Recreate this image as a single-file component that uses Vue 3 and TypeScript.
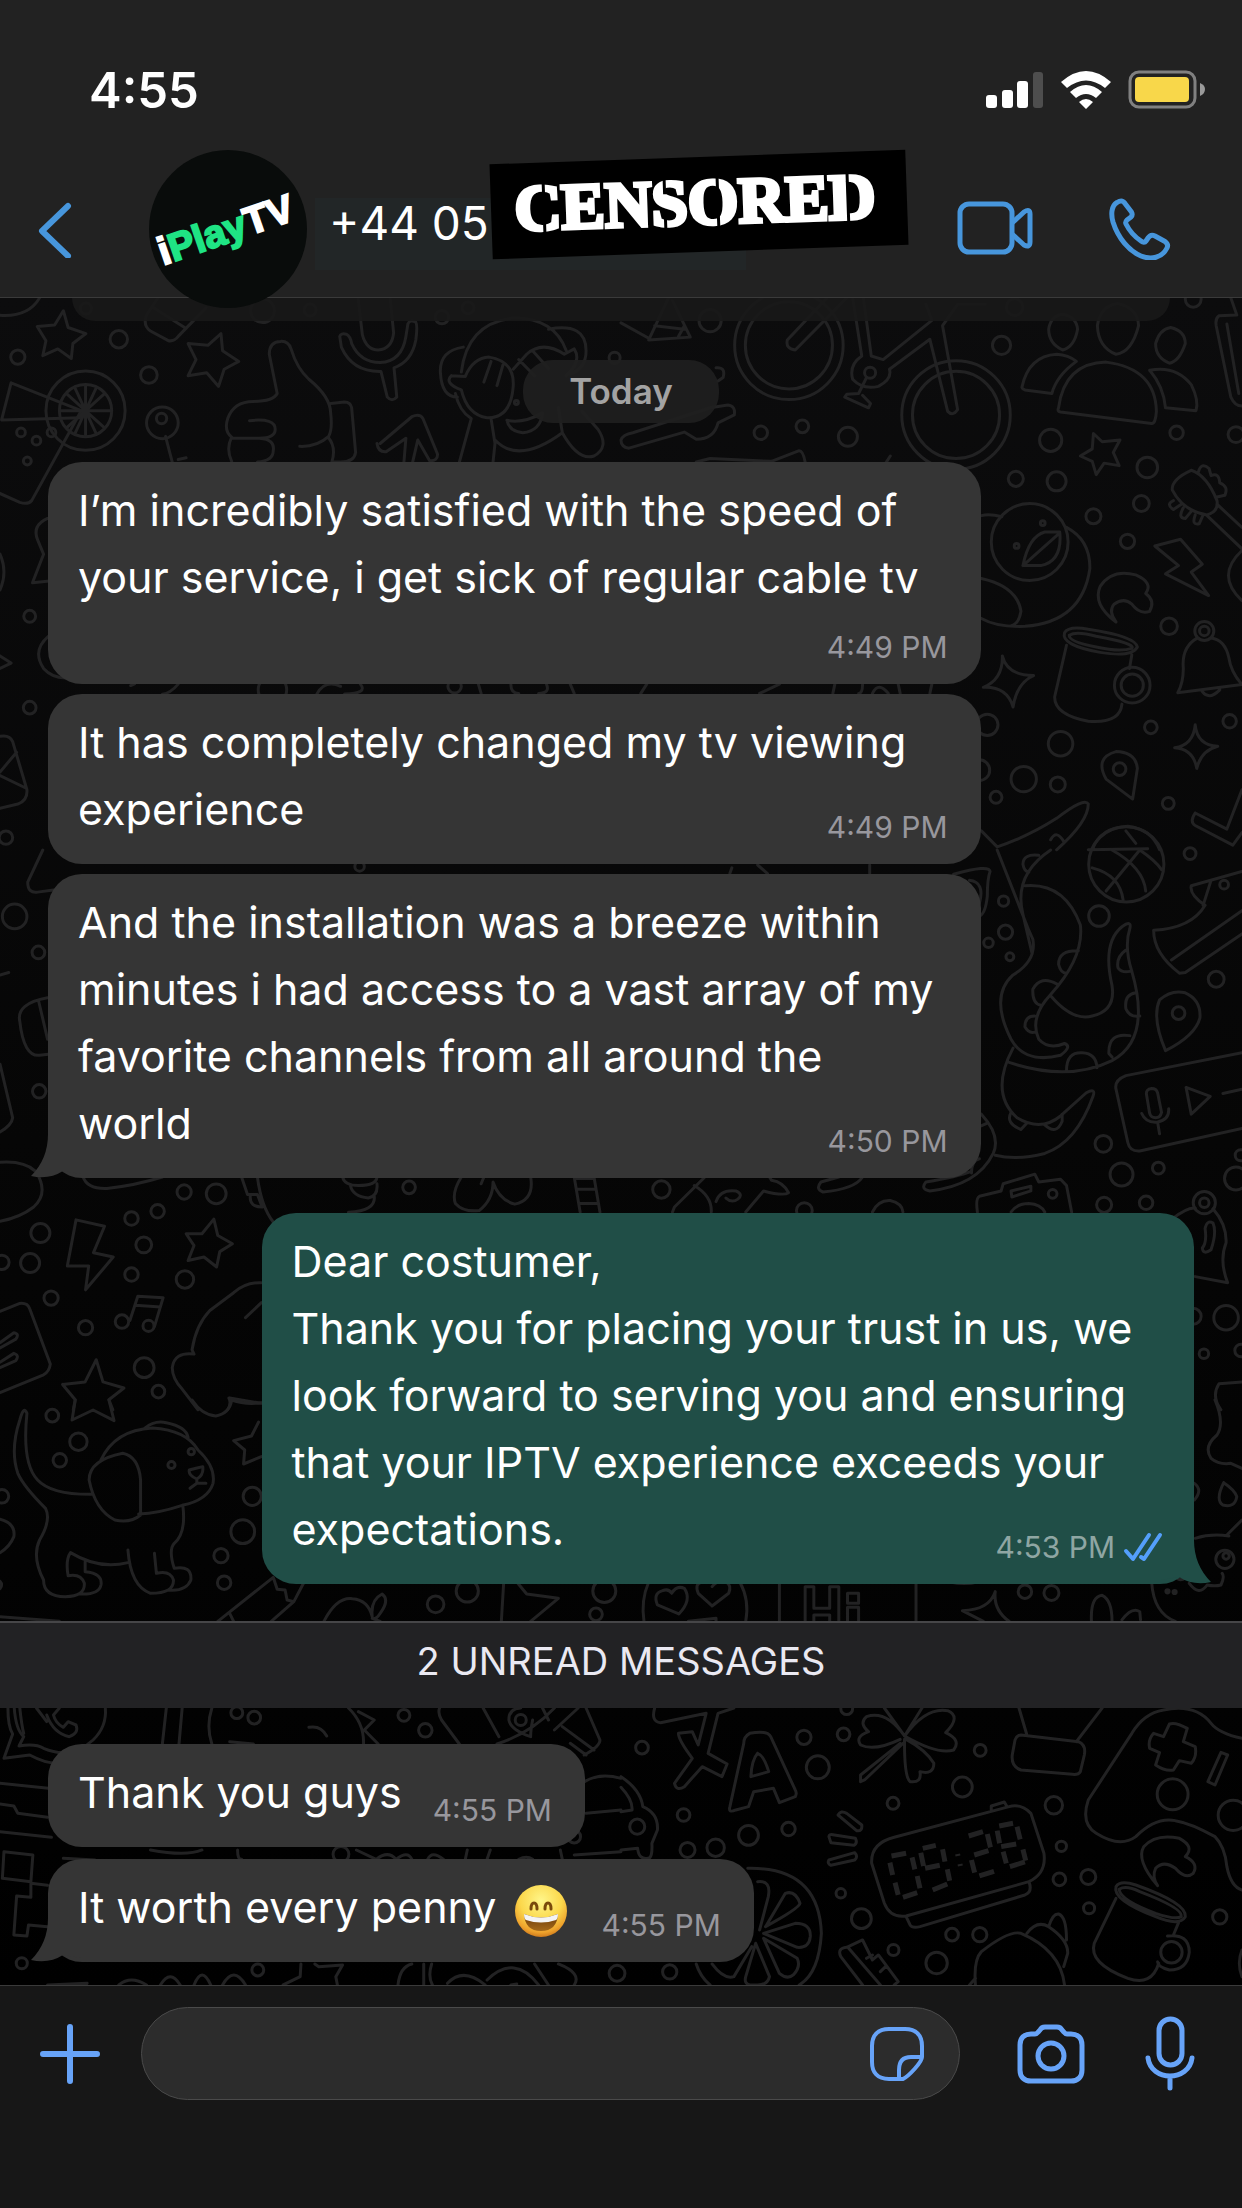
<script setup lang="ts">
interface Message {
  id: number
  lines: string[]
  time: string
  kind: 'wide' | 'short'
  sent?: boolean
  tall?: boolean
  tail?: boolean
  emoji?: boolean
}

interface Tile {
  name: string
  transform: string
  squash: number
  dots: number[][]
  shapes: string[]
}

const history: Message[] = [
  { id: 1, kind: 'wide', tall: true, time: '4:49 PM', lines: ['I’m incredibly satisfied with the speed of', 'your service, i get sick of regular cable tv'] },
  { id: 2, kind: 'wide', time: '4:49 PM', lines: ['It has completely changed my tv viewing', 'experience'] },
  { id: 3, kind: 'wide', tail: true, time: '4:50 PM', lines: ['And the installation was a breeze within', 'minutes i had access to a vast array of my', 'favorite channels from all around the', 'world'] },
  { id: 4, kind: 'wide', sent: true, tail: true, time: '4:53 PM', lines: ['Dear costumer,', 'Thank you for placing your trust in us, we', 'look forward to serving you and ensuring', 'that your IPTV experience exceeds your', 'expectations.'] },
]

const unread: Message[] = [
  { id: 5, kind: 'short', time: '4:55 PM', lines: ['Thank you guys'] },
  { id: 6, kind: 'short', tail: true, emoji: true, time: '4:55 PM', lines: ['It worth every penny'] },
]

// The wallpaper is made of tiles, each drawn on its own grid.
const tiles: Tile[] = [
  {
    name: 'stars',
    transform: 'translate(0 290) scale(.396 .357)',
    squash: 1.11,
    dots: [[217, 52, 14], [300, 138, 22], [45, 188, 18], [376, 238, 21], [663, 58, 30], [783, 56, 15], [1116, 76, 17], [1182, 50, 15], [410, 372, 40], [408, 360, 13], [53, 399, 11], [92, 422, 11], [130, 399, 11], [69, 479, 10], [75, 914, 15], [75, 1170, 16], [15, 1534, 17], [1552, 190, 14], [216, 338, 100], [216, 338, 66], [1304, 315, 5], [1148, 1110, 17], [688, 1120, 36]],
    shapes: [
      'M-10 70Q70 80 100 22',
      'M160 58L172 105L217 122L184 150L180 192L146 165L108 184L116 142L94 102L138 98Z',
      'M558 122L562 170L603 200L566 222L552 270L522 232L475 240L495 195L475 150L525 155Z',
      'M400 20L370 70Q360 100 380 115L425 142Q440 145 450 130L520 50M388 50L470 108',
      'M28 260L205 338L80 590Q70 602 50 595L-10 565M28 260L4 364L205 358',
      'M216 270V406M150 338H282M168 290L264 386M264 290L168 386M190 276L242 400M242 276L190 400',
      'M418 410L435 482M450 475L470 470',
      'M585 480Q570 445 585 412Q565 395 575 360Q590 312 640 312Q690 312 700 290L680 180Q680 145 708 144Q728 142 735 165Q750 220 780 250Q835 300 835 345Q840 390 830 410Q800 440 757 438M630 366Q695 358 695 390Q695 415 655 415H585M655 415Q695 418 690 450Q690 478 650 482M835 318L870 314Q885 314 888 330L898 455Q895 482 860 482H838Q850 440 828 412',
      'M904 20L915 125Q925 168 955 168Q990 165 994 120L985 20M858 130Q860 120 875 124Q885 130 888 150Q910 203 960 203Q1015 200 1025 130L1030 95Q1035 82 1050 90Q1055 100 1050 140Q1040 200 995 218L1002 300Q990 315 978 300L962 228Q890 230 862 160Z',
      'M960 430L1040 355Q1060 345 1068 360L1105 460Q1105 480 1085 478L1055 420L1042 482M1020 482L1025 415L975 453Q955 455 952 430',
      'M1165 230Q1180 90 1300 78Q1400 80 1430 170M1385 110Q1480 90 1480 170Q1480 220 1440 235M1170 160Q1110 170 1112 230Q1115 300 1155 300M1140 240L1175 242Q1195 190 1235 188Q1300 200 1296 270Q1290 360 1230 358Q1180 350 1165 280Q1120 260 1140 240M1240 200L1222 258M1270 210L1255 268M1296 222L1330 180Q1370 140 1425 180L1450 165Q1470 200 1430 240M1345 170L1385 220M1310 195L1350 240M1280 365Q1320 375 1370 345Q1365 395 1320 400Q1285 395 1280 365M1250 420Q1310 490 1420 400M1150 290Q1160 340 1190 360L1160 482M1240 360L1250 430L1245 482M1410 330L1420 400Q1460 480 1500 465Q1540 440 1510 390L1470 340',
      'M120 640Q80 660 95 700L110 740L82 820L125 815',
      'M0 740Q20 790 0 840M122 970Q80 1010 110 1060Q130 1085 165 1087M0 1025L28 1045L0 1060',
      'M0 1250Q25 1245 32 1265L68 1400Q70 1430 45 1440L0 1452M0 1350L42 1295M0 1360L65 1395',
      'M340 1103L330 1108M450 1104Q430 1130 410 1132M800 1132Q820 1090 860 1110M910 1104Q930 1130 870 1132M1208 1104L1215 1130M1290 1104Q1290 1130 1310 1130M1380 1104Q1390 1130 1360 1130M1440 1104L1450 1130',
    ],
  },
  {
    name: 'bicycle',
    transform: 'translate(621 290) scale(.396 .357)',
    squash: 1.11,
    dots: [[225, 86, 28], [424, 155, 137], [424, 155, 110], [846, 350, 137], [846, 350, 110], [629, 232, 14], [961, 155, 23], [994, 48, 21], [353, 400, 17], [458, 382, 16], [573, 411, 24], [1085, 421, 28], [1403, 400, 17], [1553, 405, 20], [997, 529, 19], [1100, 536, 24], [1329, 497, 26], [1314, 598, 20], [1193, 634, 19], [1279, 704, 18], [1384, 942, 21], [1445, 26, 20], [1473, 955, 12], [1473, 955, 24], [925, 1218, 27], [1110, 1271, 31], [1338, 1225, 16], [1537, 1208, 17], [1017, 1370, 32], [1103, 1385, 19], [947, 1421, 15], [905, 1345, 26], [1382, 1438, 15], [1259, 1342, 16], [1032, 706, 97], [999, 717, 6], [1065, 653, 6], [1291, 1107, 45], [1291, 1107, 28]],
    shapes: [
      'M120 22L70 140L175 132L130 30M85 100L160 110M145 130L160 100M0 92L70 135',
      'M240 218Q265 215 258 245L245 255M0 420Q5 405 30 400L225 330L270 322Q290 325 286 350L245 372Q235 418 190 418L160 398L20 443Q0 440 0 420M190 482L225 472L380 480L450 450Q460 450 465 482M670 482L680 465',
      'M520 22L420 140Q415 165 440 168L570 22M585 22L608 185Q575 210 585 250Q610 280 650 270Q685 250 678 222L780 138L825 340Q838 355 850 335L812 100L850 40L920 40M612 22L632 185L662 195L785 85L770 40M620 245L600 290L570 292L565 300L625 330L630 318L610 295',
      'M1116 68Q1150 75 1153 110Q1145 160 1115 168Q1080 150 1080 110Q1085 72 1116 68M1254 38Q1305 50 1307 100Q1290 175 1250 180Q1205 160 1203 100Q1210 45 1254 38M1388 105Q1425 115 1425 150Q1410 200 1385 205Q1350 190 1350 150Q1360 110 1388 105',
      'M1013 270Q1030 185 1100 180Q1130 182 1150 200Q1100 240 1088 290L1020 280Q1010 275 1013 270M1105 330Q1120 205 1225 202Q1350 220 1352 340Q1350 375 1340 374L1110 342Q1100 340 1105 330M1335 225Q1400 210 1440 265Q1460 310 1452 338L1375 330Q1370 270 1335 225',
      'M1193 402L1215 425L1260 420L1243 455L1258 492L1220 485L1200 517L1190 480L1160 465L1190 445Z',
      'M1540 22L1555 70L1510 72Q1500 80 1503 100L1540 300Q1550 325 1568 325M1530 95L1560 290',
      'M1440 505Q1390 530 1392 560Q1420 620 1480 630Q1510 620 1505 590Q1480 520 1440 505M1458 510Q1465 480 1485 500L1490 520Q1510 510 1512 540Q1535 550 1525 575L1505 580M1395 590Q1375 600 1395 615L1415 600M1420 610Q1405 640 1425 640L1440 620M1450 630Q1440 660 1460 655L1470 630M1505 600L1568 665M1480 632L1568 725M1568 730Q1500 800 1568 870',
      'M1015 772Q1030 690 1070 678H1108Q1115 760 1060 772ZM1015 772L1108 680M910 632Q930 626 962 635M1125 665Q1185 700 1184 780Q1165 930 1020 942Q950 945 910 920M910 808Q1000 830 1010 900Q1005 935 985 941',
      'M1348 717L1413 698L1468 768L1440 790L1484 856L1375 795L1408 772Z',
      'M1250 930Q1190 880 1210 830Q1240 780 1300 798Q1345 820 1325 850Q1350 870 1335 900Q1310 910 1290 880Q1270 860 1245 880Q1230 900 1250 930',
      'M1120 960Q1130 940 1180 950Q1300 970 1304 1000Q1290 1030 1210 1015Q1110 995 1120 960M1132 967Q1150 955 1200 970Q1300 990 1290 1004Q1260 1015 1200 1000Q1130 985 1132 967M1125 995L1095 1140Q1095 1190 1180 1208Q1260 1215 1265 1160M1290 1022L1284 1060',
      'M1455 975Q1415 1000 1420 1060Q1420 1100 1406 1128L1568 1105Q1540 1070 1535 1030Q1525 980 1490 975M1468 1125Q1485 1150 1512 1120',
      'M963 1025Q975 1080 1042 1080Q1000 1100 990 1168Q975 1110 915 1113Q965 1090 963 1025M1450 1218Q1455 1275 1507 1278Q1465 1290 1454 1340Q1445 1285 1398 1282Q1445 1275 1450 1218',
      'M1292 1426L1225 1370Q1195 1310 1250 1293Q1300 1295 1304 1340ZM910 1515L950 1560Q1030 1530 1100 1480Q1170 1420 1180 1440Q1180 1490 1100 1568M1085 1540Q1100 1510 1118 1545M1190 1568Q1210 1505 1280 1502Q1340 1510 1360 1568M1275 1515L1300 1550M1450 1465Q1435 1490 1450 1500L1545 1555L1568 1520M1450 1465L1530 1510L1568 1400M1180 1568L1330 1565',
      'M50 1130L65 1104M350 1130L400 1104M540 1104L535 1130M610 1104Q610 1130 600 1130M700 1104L705 1130M635 1130Q650 1095 675 1130M785 1104L780 1130',
    ],
  },
  {
    name: 'clouds',
    transform: 'translate(0 850) scale(.396 .357)',
    squash: 1.11,
    dots: [[37, 186, 31], [97, 287, 16], [99, 676, 17], [465, 958, 18], [546, 963, 25], [398, 1012, 17], [332, 1032, 17], [102, 1073, 24], [76, 1157, 24], [5, 1155, 18], [363, 1106, 20], [332, 1189, 17], [467, 1203, 22], [129, 1255, 18], [216, 1338, 18], [364, 1450, 25], [400, 1517, 16], [1033, 945, 16], [908, 46, 12], [308, 1321, 17], [375, 1333, 14]],
    shapes: [
      'M108 0L70 90Q70 122 95 118L135 112M0 350L22 343M120 414Q40 430 50 480Q60 580 100 575L122 572M98 425L120 530M0 600L32 750Q30 770 0 790',
      'M0 875Q60 870 90 900Q125 960 85 1000Q50 1030 0 1040M210 916Q220 950 270 948Q340 940 410 916',
      'M192 1036L264 1054L236 1128L286 1140L216 1232L224 1165H170Z',
      'M540 1034L550 1080L587 1103L555 1125L547 1168L515 1140L475 1150L490 1108L470 1075L510 1075Z',
      'M328 1318L348 1250L412 1254L390 1335M342 1275L405 1280',
      'M0 1292L50 1270Q70 1268 75 1285L127 1440Q125 1460 110 1470L0 1520M0 1380L35 1352Q50 1355 40 1370L0 1395M0 1435L35 1410Q50 1415 40 1430L0 1450',
      'M243 1428L260 1490L313 1507L275 1540L285 1568M158 1497L215 1490L243 1428M158 1497L190 1540L185 1568',
      'M660 1212Q620 1210 590 1240L530 1290Q495 1330 485 1400L490 1412Q440 1405 435 1450Q435 1480 460 1510L500 1568M580 1535L660 1550M620 1310L660 1268M575 1568Q585 1550 578 1535',
      'M610 916L625 965H650L662 1000Q630 1000 632 970M650 916Q660 1000 690 1042M865 916Q870 940 905 940Q950 940 952 916M885 940Q890 970 930 975Q955 970 952 935M945 970Q950 1010 880 1015',
      'M1165 916Q1140 960 1150 990Q1170 1015 1210 1010Q1245 980 1245 930Q1260 980 1300 992Q1350 980 1340 916M1215 935L1222 916M1450 916L1465 1014M1500 916L1515 1014M1455 920H1500M1457 950H1505M1462 990H1510',
    ],
  },
  {
    name: 'octopus',
    transform: 'translate(621 850) scale(.396 .357)',
    squash: 1.11,
    dots: [[1276, 40, 95], [1207, 185, 26], [966, 143, 13], [971, 230, 18], [928, 260, 12], [982, 299, 10], [1437, 10, 15], [1503, 362, 20], [1408, 457, 16], [1218, 823, 21], [1264, 909, 29], [1357, 891, 15], [1326, 988, 17], [1220, 994, 19], [1553, 920, 29], [1565, 855, 14], [102, 951, 22], [1528, 1310, 31], [1472, 1411, 12], [1566, 1402, 16], [1473, 988, 12], [1473, 988, 28], [1523, 97, 11], [1090, 963, 11], [463, 1010, 20], [1445, 1306, 20]],
    shapes: [
      'M1190 50Q1260 70 1268 140M1225 115L1310 0M1310 0Q1350 30 1365 55M1240 0Q1320 50 1325 115',
      'M950 0L1028 220M1085 0Q990 70 1015 180L1038 290M1020 100Q1120 90 1160 210Q1170 300 1085 405Q1030 470 1055 530Q1080 560 1120 542Q1140 550 1110 575Q1020 600 985 530Q930 410 990 350Q1050 310 1040 250L1028 220M1085 408Q1140 480 1190 465Q1250 450 1240 380Q1215 260 1265 215Q1290 195 1285 220Q1270 270 1290 340Q1340 530 1240 590Q1130 650 980 595M990 555Q930 680 1000 750Q1060 790 1110 745L1175 680Q1200 665 1192 690Q1150 820 1070 850Q1000 870 945 855M1155 282Q1105 280 1105 320Q1110 345 1125 345M1100 375Q1060 350 1040 390Q1038 430 1060 435M1045 465Q1020 465 1020 495Q1030 515 1045 510M1275 280Q1250 300 1255 330Q1265 345 1285 340M1300 400Q1270 405 1275 445Q1285 470 1310 465M1285 520Q1230 510 1232 570L1240 580M1125 618Q1125 565 1165 568Q1200 570 1202 610M1055 15Q1015 10 1015 40Q1018 60 1030 62',
      'M985 735Q970 765 1010 783L1025 765M1070 770Q1100 800 1114 760V740M910 740Q960 800 940 850Q900 940 780 955Q755 950 770 930Q850 915 885 900M905 775L925 765M905 865Q885 870 885 905M610 916Q590 950 510 958Q490 950 505 930L550 916M840 68Q930 40 932 60Q925 80 925 130Q920 180 905 185M880 85Q920 90 905 150',
      'M1568 60L1440 100Q1435 125 1475 155Q1440 220 1345 225Q1345 290 1410 345L1425 343L1568 235M1390 308L1568 170M1490 85L1470 155',
      'M1375 562Q1340 470 1360 420Q1390 390 1425 400Q1465 420 1462 470Q1450 520 1375 562',
      'M1568 568L1275 632Q1245 645 1250 670L1280 820Q1285 845 1310 843L1568 780M1327 685Q1325 670 1340 668Q1352 668 1355 680L1365 735Q1362 750 1350 750Q1338 750 1335 738ZM1315 738Q1325 765 1355 762Q1385 755 1383 725M1355 762L1360 795M1427 665L1488 690L1440 740ZM1520 682L1568 670',
      'M900 1014Q895 975 905 970L960 955L965 935L1045 908L1055 930L1110 922L1125 940L1138 1014M985 955L1035 942V955L987 972ZM985 1014Q1000 990 1030 990Q1060 992 1070 1014',
      'M1390 1035Q1430 1000 1450 1003M1495 1005Q1530 1050 1528 1100Q1510 1150 1532 1212L1450 1195M1475 1060Q1480 1035 1495 1045Q1505 1070 1490 1120Q1470 1135 1468 1115Q1480 1100 1475 1060',
      'M130 1014L135 1000L210 918M185 940Q230 970 228 1014M240 985Q250 950 290 955Q310 965 295 978Q280 990 265 975M315 1014L360 955Q410 970 423 960Q410 930 380 925L375 916M635 1014Q650 980 680 982Q710 990 712 1014M1568 1490L1510 1495Q1490 1530 1515 1568M275 65L280 50M345 42L370 66M628 42V66',
    ],
  },
  {
    name: 'puppy',
    transform: 'translate(0 1400) scale(.396 .3333)',
    squash: 1.19,
    dots: [[132, 47, 16], [198, 125, 22], [151, 181, 17], [5, 289, 17], [637, 289, 23], [613, 395, 30], [558, 467, 18], [566, 548, 17], [433, 195, 9], [483, 155, 8], [1100, 613, 21], [1180, 573, 28], [1526, 573, 29], [1505, 643, 16], [-8, 555, 12]],
    shapes: [
      'M190 0L182 60L235 30L288 62L275 0M485 0Q510 45 545 48Q580 40 585 0Q620 15 660 8',
      'M653 66L635 108L590 122L618 150L615 192L660 170',
      'M255 180Q290 90 385 84Q470 90 500 150Q545 200 538 250Q525 300 460 316Q400 340 350 342M365 85Q390 60 420 68Q470 80 475 112M355 345Q330 370 290 360Q240 330 225 240Q225 180 310 160Q350 170 355 240ZM235 283Q130 285 95 240Q55 190 68 40Q60 15 50 60Q25 150 45 220Q60 260 115 325Q130 360 100 420Q80 470 110 540Q110 590 165 590Q215 590 213 550Q205 520 172 527Q165 480 178 458Q250 510 323 488M323 450Q330 560 380 580Q440 580 438 540Q430 510 395 520L390 460M462 320Q470 400 440 430Q425 450 440 505Q485 495 482 540Q470 575 425 570M215 485V515Q260 520 255 555Q250 585 200 582M478 210L495 205L512 200Q515 225 497 237Q475 225 478 210M497 237V250L480 265M497 250L520 250',
      'M0 358Q40 370 35 410Q25 440 0 458M0 650L150 664M550 664L690 532L700 568L720 570L725 600L742 605L685 664M742 605L768 546M580 640L590 664M818 664Q850 590 890 596Q930 600 940 650Q935 600 965 582Q985 600 960 640Q950 660 940 655L960 664M1272 546L1266 664M1305 546L1330 582L1410 595L1340 664',
    ],
  },
  {
    name: 'hello',
    transform: 'translate(621 1400) scale(.396 .3333)',
    squash: 1.19,
    dots: [[1020, 575, 17], [1087, 579, 19], [1525, 478, 23], [1528, 468, 8], [1380, 574, 4], [1398, 576, 4]],
    shapes: [
      'M70 546Q50 600 58 664M300 546Q325 600 315 664M146 642L92 615Q80 580 105 572Q120 565 128 580Q140 555 160 565Q180 600 146 642M230 618L195 580Q185 550 205 546M230 560Q240 545 250 546M230 618L272 580Q280 555 265 546M170 664L240 655V664',
      'M400 546V664M745 546V664M465 664V560H487V625H527V560H550V664M487 664V645H527V664M572 580H600V610H572ZM572 664V622H600V664',
      'M945 575Q930 630 862 632L915 664M945 575Q940 630 980 664M1188 664Q1185 590 1215 586Q1240 600 1240 664M1265 660Q1290 620 1310 635L1312 660M1340 546Q1345 640 1400 664M1450 415Q1490 400 1535 408M1530 405L1568 360M1500 0Q1525 70 1505 105Q1470 140 1490 175Q1510 195 1540 190L1568 205M1522 248Q1500 300 1520 315Q1550 325 1555 290Q1550 270 1522 248M1448 250Q1470 270 1448 300M1400 530Q1410 545 1425 535M1435 550Q1460 590 1480 555Q1500 560 1515 555Q1525 530 1518 520M830 546Q870 555 900 546',
    ],
  },
  {
    name: 'phone',
    transform: 'translate(0 1700) scale(.396 .3333)',
    squash: 1.19,
    dots: [[598, 38, 15], [642, 53, 16], [1020, 46, 15], [1074, 91, 17], [1315, 60, 14], [55, 790, 14], [651, 810, 15], [861, 463, 20], [1450, 410, 16]],
    shapes: [
      'M20 24Q20 80 32 102L10 175L75 165Q130 200 165 185M36 24Q40 90 60 110L48 138Q90 130 110 145Q180 180 235 120Q270 80 266 24M50 24Q55 80 60 100M118 45Q135 100 175 110Q200 100 192 75L172 65L160 82Q140 70 135 45L150 24M92 24L118 65',
      'M420 24L410 132M460 24L452 132M535 24Q520 80 535 132M880 24Q920 70 918 132M580 125L640 132M780 82Q810 75 825 108M905 35L945 60L920 90L955 132M1110 24Q1105 40 1115 60L1160 132M1220 24L1260 110M1370 24L1385 60M1400 90L1460 24M1255 132Q1340 100 1400 24M1480 24L1515 120Q1515 140 1475 165M1285 60Q1285 25 1315 24M1345 60Q1340 90 1340 110Q1290 90 1285 60M1440 130L1480 165M1420 80L1500 150',
      'M0 250L122 265M0 312L35 318L45 340L120 352M0 395L130 412M10 455L83 465L78 545L6 535ZM78 550L120 556M78 550V592L42 588L35 705L68 708L72 675L120 680M160 475L240 480M600 450Q600 480 610 478M900 450L950 478Q980 450 1000 478Q1030 450 1040 478M1080 478Q1090 450 1120 478M1180 450L1175 478M1238 450L1230 478M1310 478Q1330 465 1345 478M1415 450L1420 478M1450 465L1568 455M1480 340L1568 330M1470 250Q1510 215 1568 235M380 450Q470 470 510 450',
      'M120 855L220 850L215 858M300 855Q330 825 370 855M405 855Q430 805 455 855M490 855Q510 795 532 855M562 855Q590 795 620 855M715 855L758 830L760 792M795 792L805 800L865 795L848 830L852 855M1005 855Q1010 800 1040 792M1070 792V855M1090 792Q1080 830 1092 855M1130 850Q1170 800 1225 855M1230 840Q1300 760 1360 855M1350 792L1385 855M1410 792Q1470 820 1450 855M1290 855L1305 852',
    ],
  },
  {
    name: 'clock',
    transform: 'translate(621 1700) scale(.396 .3333)',
    squash: 1.19,
    dots: [[53, 143, 16], [462, 112, 18], [562, 103, 16], [497, 202, 29], [907, 151, 15], [862, 261, 25], [687, 310, 15], [1093, 316, 22], [158, 345, 16], [423, 387, 17], [322, 406, 25], [168, 450, 19], [239, 443, 22], [41, 380, 19], [1393, 283, 39], [1546, 346, 38], [1112, 439, 13], [1107, 538, 16], [1180, 531, 19], [1182, 625, 14], [1512, 651, 18], [555, 580, 12], [607, 656, 25], [836, 704, 16], [906, 704, 18], [688, 750, 14], [797, 789, 27], [123, 816, 18], [1390, 757, 27], [570, 26, 15], [-10, 820, 20]],
    shapes: [
      'M85 24Q75 65 100 68L215 40L195 135L180 95L145 100Q145 120 180 175L135 250Q140 275 160 260L205 200L255 230L268 192L220 160L245 40L285 24M275 320Q270 340 290 330L322 320L335 275L385 265L400 308L440 290Q445 280 440 270L378 110Q370 90 325 100Q310 110 310 130ZM345 160Q330 180 328 230L373 215Q360 165 345 160',
      'M716 108Q670 30 620 50Q600 70 625 95Q590 110 605 135Q640 155 705 118M665 24L716 108L760 24M716 108Q770 20 825 32Q860 50 820 98Q860 120 840 150Q800 165 716 108M716 118Q715 230 730 245Q760 250 755 215Q790 225 790 190Q770 150 720 118M705 130L605 225V245L615 240L712 130',
      'M1005 24L1025 105M1215 24L1150 125M1010 105L1155 125Q1175 135 1170 165L1160 215Q1155 225 1140 223L1010 210Q985 200 988 165L995 120Q1000 105 1010 105',
      'M1568 115Q1510 100 1490 70Q1450 10 1370 30Q1320 40 1290 100L1180 300Q1160 370 1200 400Q1260 445 1300 410Q1350 350 1400 362Q1440 370 1500 410Q1525 440 1530 500Q1540 560 1568 570M1385 72Q1400 65 1430 85L1420 125L1450 140Q1455 170 1440 190L1410 182L1395 210Q1375 215 1350 195L1360 158L1335 145Q1330 120 1345 100L1370 110ZM1515 157L1532 165L1500 255L1482 245Z',
      'M690 412Q630 430 633 490L665 610Q680 655 720 648L1030 545Q1075 520 1068 460L1035 340Q1010 310 980 320ZM935 330V318L968 306L975 320M720 650L730 675Q735 685 755 680L1020 585Q1040 575 1030 545M548 345Q555 330 570 340L608 375Q610 395 595 392ZM525 410Q525 402 535 404L592 415Q598 430 588 436L530 428ZM525 480L590 458Q600 470 590 480L530 496Q520 490 525 480',
      'M1355 557Q1300 480 1320 440Q1350 400 1410 415Q1450 440 1425 470Q1460 490 1445 520Q1425 540 1400 505Q1370 480 1350 505Q1340 530 1355 557M1250 560Q1260 540 1300 555Q1430 610 1425 650Q1410 680 1350 650Q1240 600 1250 560M1258 568Q1275 555 1310 575Q1420 625 1415 650Q1400 660 1350 640Q1260 600 1258 568M1250 595L1195 730Q1180 790 1280 835Q1340 860 1358 790M1408 668L1395 705M1380 708Q1435 700 1435 757Q1430 810 1385 810Q1355 800 1355 785',
      'M895 855Q890 780 910 755Q980 690 1010 700Q1110 750 1120 855M1025 700Q1050 660 1080 680Q1130 720 1128 760L1118 800M1080 680Q1090 640 1105 642Q1125 650 1125 720M880 855L895 835M555 770Q545 745 570 742L610 720L635 780L650 765L700 845L690 855M555 770L610 855M575 745L655 855M620 775L635 765M655 815L668 800M1568 750Q1555 790 1568 830',
      'M320 505Q500 500 506 700Q500 820 450 855M190 792Q200 830 225 855M345 545Q380 540 372 590L350 690M365 680L415 580Q440 570 452 610Q450 625 365 680M360 700L440 670Q480 670 478 710Q475 745 445 742ZM360 715L445 775Q455 800 435 825Q420 840 400 820ZM340 730L375 830Q370 855 345 855H325Q310 850 315 830ZM330 740L285 830Q260 840 230 792',
      'M0 230Q50 270 55 320Q95 340 92 390L78 430Q80 475 68 475Q45 480 42 445L0 450M0 262Q30 300 28 330L0 335',
    ],
  },
]

// Seven-segment strokes of the alarm clock, one dash per segment.
const clockSegments =
  'M683 468L720 460M679 488L686 525M735 472L742 508M692 548L700 585M748 528L755 565M712 592L748 578M762 445L795 436M757 458L764 498M812 448L818 485M768 505L805 496M824 508L830 542M787 570L824 552M850 462L851 468M856 492L857 498M878 408L914 395M925 402L933 442M892 465L928 452M885 480L893 518M905 528L942 514M955 378L990 370M950 392L956 430M1000 380L1008 418M960 440L998 432M965 455L973 490M1015 448L1022 482M982 500L1020 486'
</script>

<template>
  <div class="screen">
    <header class="top">
      <div class="status">
        <time class="clock">4:55</time>
        <div class="indicators">
          <svg width="58" height="38" viewBox="0 0 58 38" aria-label="Signal">
            <rect x="0" y="24" width="11" height="13" rx="3" fill="#fff" />
            <rect x="16" y="19" width="11" height="18" rx="3" fill="#fff" />
            <rect x="31" y="10" width="11" height="27" rx="3" fill="#fff" />
            <rect x="47" y="1" width="10" height="36" rx="3" fill="#4e4e4e" />
          </svg>
          <svg width="52" height="38" viewBox="0 0 52 38" aria-label="Wi-Fi">
            <path d="M1 11Q26-11 51 11L45 17Q26 2 7 17ZM10 21Q26 7 42 21L36 27Q26 19 16 27ZM19 31Q26 25 33 31L26 38Z" fill="#fff" />
          </svg>
          <svg width="78" height="40" viewBox="0 0 78 40" aria-label="Battery">
            <rect x="2" y="2" width="65" height="35" rx="9" fill="none" stroke="#808080" stroke-width="3" />
            <rect x="7" y="7" width="54" height="25" rx="4" fill="#f8d74a" />
            <path d="M72 13Q77 15 77 19Q77 24 72 26Z" fill="#9a9a9a" />
          </svg>
        </div>
      </div>

      <nav class="nav">
        <button class="icon back" type="button" aria-label="Back">
          <svg width="34" height="58" viewBox="0 0 34 58"><path d="M30 6L4 31L30 56" fill="none" stroke="#4796dc" stroke-width="6" stroke-linecap="round" stroke-linejoin="round" /></svg>
        </button>
        <div class="avatar"><span class="logo">i<b>Play</b>TV</span></div>
        <div class="contact">
          <span class="number">+44 05</span>
          <strong class="censored">
            CENSORED
            <svg class="stencil" viewBox="0 0 416 95" aria-hidden="true">
              <path d="M53 15V75M174 15V36M174 52V75M227 15V75M292 15V43M357 15V75" />
            </svg>
          </strong>
        </div>
        <div class="calls">
          <button class="icon" type="button" aria-label="Video call">
            <svg width="76" height="60" viewBox="0 0 76 60" fill="none" stroke="#4796dc" stroke-width="5" stroke-linejoin="round">
              <rect x="3" y="5" width="52" height="48" rx="9" />
              <path d="M55 24L67 13Q73 9 73 15V43Q73 49 67 46L55 35" />
            </svg>
          </button>
          <button class="icon" type="button" aria-label="Voice call">
            <svg width="62" height="62" viewBox="0 0 62 62" fill="none" stroke="#4796dc" stroke-width="5" stroke-linejoin="round">
              <path d="M8 4.500C2 8 2 17 4 24C9 40 20 53 32 58C42 62 53 60 58 50C59.500 47 58 45 56 43.500L46 38C43 36.500 41 37 39 40L37 43C36 44.500 34 44.500 32 43C26 39 20 32 17 26C16 24 17 23 18 22L22 19C23.500 17.500 23.500 16 22.500 14L16 5.500C14 2.500 11 2.500 8 4.500Z" />
            </svg>
          </button>
        </div>
      </nav>
    </header>

    <main class="chat">
      <svg class="wallpaper" viewBox="0 298 1242 1688" preserveAspectRatio="xMidYMin slice" aria-hidden="true">
        <g v-for="tile in tiles" :key="tile.name" :transform="tile.transform">
          <ellipse v-for="(dot, i) in tile.dots" :key="'d' + i" :cx="dot[0]" :cy="dot[1]" :rx="dot[2]" :ry="dot[2] * tile.squash" />
          <path v-for="(shape, i) in tile.shapes" :key="'s' + i" :d="shape" />
          <path v-if="tile.name === 'clock'" class="segments" :d="clockSegments" />
        </g>
      </svg>

      <div class="notice"></div>
      <div class="day">Today</div>

      <article v-for="m in history" :key="m.id" class="bubble" :class="[m.kind, { sent: m.sent, tall: m.tall }]">
        <p class="text"><span v-for="line in m.lines" :key="line" class="line">{{ line }}</span></p>
        <span class="meta">
          <time>{{ m.time }}</time>
          <svg v-if="m.sent" width="40" height="30" viewBox="0 0 40 30" aria-label="Read">
            <path d="M3 19L10 27L26 3M18 25L21 27L37 3" fill="none" stroke="#549ffb" stroke-width="4" stroke-linecap="round" stroke-linejoin="round" />
          </svg>
        </span>
        <svg v-if="m.tail" class="tail" width="50" height="44" viewBox="0 0 50 44" aria-hidden="true">
          <path d="M17 0Q17 25 0 42Q18 46 32 37L50 40V0Z" />
        </svg>
      </article>

      <div class="unread">2 UNREAD MESSAGES</div>

      <article v-for="m in unread" :key="m.id" class="bubble" :class="m.kind">
        <p class="text">
          {{ m.lines[0] }}
          <svg v-if="m.emoji" class="emoji" width="52" height="52" viewBox="0 0 52 52" role="img" aria-label="grinning face">
            <defs>
              <radialGradient id="face" cx=".5" cy=".3" r=".72">
                <stop offset="0" stop-color="#fff68a" />
                <stop offset=".55" stop-color="#fbd84c" />
                <stop offset=".85" stop-color="#eea22c" />
                <stop offset="1" stop-color="#c9731a" />
              </radialGradient>
              <linearGradient id="mouth" x1="0" y1="0" x2="0" y2="1">
                <stop offset="0" stop-color="#6b3b0a" />
                <stop offset="1" stop-color="#a5691a" />
              </linearGradient>
            </defs>
            <circle cx="26" cy="26" r="26" fill="url(#face)" />
            <path d="M16 24Q16 18 19 18Q22 18 22 24M30 24Q30 18 33 18Q36 18 36 24" fill="none" stroke="#7a4a0c" stroke-width="3" stroke-linecap="round" />
            <path d="M9 29Q26 36 43 29Q42 46 26 46Q10 46 9 29Z" fill="url(#mouth)" />
            <path d="M9 29Q26 36 43 29Q43 34 41 35Q26 40 11 35Q9 34 9 29Z" fill="#f4f4f4" />
          </svg>
        </p>
        <span class="meta"><time>{{ m.time }}</time></span>
        <svg v-if="m.tail" class="tail" width="50" height="44" viewBox="0 0 50 44" aria-hidden="true">
          <path d="M17 0Q17 25 0 42Q18 46 32 37L50 40V0Z" />
        </svg>
      </article>
    </main>

    <footer class="composer">
      <button class="icon" type="button" aria-label="Attach">
        <svg width="60" height="60" viewBox="0 0 60 60"><path d="M3 30H57M30 3V57" stroke="#67a3f8" stroke-width="6" stroke-linecap="round" /></svg>
      </button>
      <div class="field">
        <input type="text" aria-label="Message" />
        <button class="icon" type="button" aria-label="Stickers">
          <svg width="56" height="56" viewBox="0 0 56 56" fill="none" stroke="#67a3f8" stroke-width="4" stroke-linejoin="round">
            <path d="M20 3H36C47 3 53 9 53 20V31C53 36 40 50 34 53H20C8 53 3 46 3 36V20C3 9 9 3 20 3Z" />
            <path d="M30 53V44C30 35 34 31 42 31H53" />
          </svg>
        </button>
      </div>
      <div class="tools">
        <button class="icon" type="button" aria-label="Camera">
          <svg width="68" height="60" viewBox="0 0 68 60" fill="none" stroke="#67a3f8" stroke-width="5" stroke-linejoin="round">
            <path d="M14 10H18C20 10 21 8 23 6C24 4 26 3 28 3H40C42 3 44 4 45 6C47 8 48 10 50 10H54C61 10 65 14 65 21V46C65 53 61 57 54 57H14C7 57 3 53 3 46V21C3 14 7 10 14 10Z" />
            <circle cx="34" cy="32" r="13" />
          </svg>
        </button>
        <button class="icon" type="button" aria-label="Voice message">
          <svg width="50" height="76" viewBox="0 0 50 76" fill="none" stroke="#67a3f8" stroke-width="5" stroke-linecap="round">
            <rect x="14" y="3" width="23" height="46" rx="11.500" />
            <path d="M3 42C6 66 44 66 47 42M25 61V72" />
          </svg>
        </button>
      </div>
    </footer>
  </div>
</template>

<style>
body {
  background: #171717;
}
</style>

<style scoped>
.screen {
  display: flex;
  flex-direction: column;
  min-height: 100vh;
  color: #fff;
  background: #171717;
  font-family: Inter, "Liberation Sans", sans-serif;
}

.icon {
  display: block;
  padding: 0;
  border: 0;
  background: none;
}

.icon svg,
.indicators svg {
  display: block;
}

.top {
  position: relative;
  z-index: 2;
  padding-top: 60px;
  background: #222;
  border-bottom: 1px solid #3a3a3a;
}

.status {
  display: flex;
  align-items: center;
  justify-content: space-between;
  height: 60px;
  padding: 0 36px 0 89px;
}

.clock {
  font-size: 49px;
  font-weight: 600;
}

.indicators {
  display: flex;
  align-items: center;
  gap: 16px;
}

.nav {
  display: flex;
  align-items: center;
  height: 158px;
  margin: 30px 0 -11px;
  padding: 0 71px 0 38px;
}

.avatar {
  display: flex;
  align-items: center;
  justify-content: center;
  width: 158px;
  height: 158px;
  margin-left: 77px;
  border-radius: 50%;
  background: #090c0b;
}

.logo {
  padding-right: 6px;
  font: bold 39px/40px "Liberation Sans", sans-serif;
  -webkit-text-stroke: 2px currentColor;
  transform: rotate(-19deg);
}

.logo b {
  color: #1fe484;
}

.contact {
  position: relative;
  width: 431px;
  height: 72px;
  margin: 10px 0 0 8px;
  background: #222627;
}

.number {
  padding-left: 14px;
  font-size: 46px;
  line-height: 50px;
}

.censored {
  position: absolute;
  top: -41px;
  left: 176px;
  box-sizing: border-box;
  width: 416px;
  height: 95px;
  padding-right: 8px;
  background: #000;
  font: bold 65px/90px "Liberation Serif", serif;
  text-align: center;
  -webkit-text-stroke: 4px #fff;
  transform: rotate(-2deg);
}

.stencil {
  position: absolute;
  inset: 0;
}

.stencil path {
  stroke: #000;
  stroke-width: 3px;
}

.calls {
  display: flex;
  align-items: center;
  gap: 76px;
  margin-left: auto;
}

.chat {
  position: relative;
  z-index: 1;
  display: flex;
  flex: 1;
  flex-direction: column;
  align-items: flex-start;
  padding-bottom: 11px;
  background: linear-gradient(#0c0c0d, #060606 50%, #000);
}

.wallpaper {
  position: absolute;
  inset: 0;
  z-index: -1;
  width: 100%;
  height: 100%;
}

.wallpaper path,
.wallpaper ellipse {
  fill: none;
  stroke: #222223;
  stroke-width: 3px;
  stroke-linejoin: round;
  stroke-linecap: round;
  vector-effect: non-scaling-stroke;
}

.wallpaper .segments {
  stroke-width: 5px;
  stroke-linecap: butt;
}

.notice {
  align-self: stretch;
  height: 23px;
  margin: 0 72px;
  border-radius: 0 0 24px 24px;
  background: rgba(24, 24, 24, 0.9);
}

.day {
  align-self: center;
  margin: 39px 0 39px;
  padding: 0 46px;
  border-radius: 30px;
  background: rgba(31, 31, 31, 0.92);
  color: #a3a3a3;
  font-size: 35px;
  font-weight: 600;
  line-height: 63px;
}

.bubble {
  position: relative;
  margin: 0 48px 10px;
  padding: 15px 33px 17px 30px;
  border-radius: 34px;
  background: #353535;
}

.wide {
  display: grid;
  box-sizing: border-box;
  width: calc(75% + 1px);
}

.wide .text,
.wide .meta {
  grid-area: 1 / 1;
}

.short {
  display: flex;
  gap: 31px;
  margin-bottom: 12px;
}

.text {
  margin: 0 0 4px;
  font-size: 43px;
  line-height: 67px;
}

.line {
  display: block;
}

.tall .text {
  margin-bottom: 56px;
}

.meta {
  display: flex;
  align-items: center;
  align-self: end;
  justify-self: end;
  gap: 8px;
  height: 34px;
  margin-bottom: 3px;
  color: #98979d;
  font-size: 30px;
  line-height: 34px;
}

.sent {
  align-self: flex-end;
  margin: 25px 48px 37px;
  background: #204e47;
}

.sent .meta {
  color: #8fa6a3;
}

.sent .meta svg {
  margin-right: -2px;
}

.tail {
  position: absolute;
  bottom: 0;
  left: -17px;
  fill: #353535;
}

.sent .tail {
  right: -17px;
  left: auto;
  fill: #204e47;
  transform: scaleX(-1);
}

.emoji {
  margin: -4px 4px -4px 6px;
  vertical-align: -10px;
}

.unread {
  align-self: stretch;
  margin-bottom: 36px;
  padding-bottom: 8px;
  border-top: 2px solid #464648;
  background: #222224;
  color: #eae9f2;
  font-size: 38px;
  line-height: 77px;
  text-align: center;
}

.composer {
  display: flex;
  align-items: center;
  padding: 21px 47px 108px 40px;
  border-top: 1px solid #3a3a3a;
  background: #171717;
}

.field {
  display: flex;
  flex: 1;
  align-items: center;
  box-sizing: border-box;
  height: 93px;
  margin: 0 57px 0 41px;
  padding-right: 34px;
  border: 1px solid #4a4a4a;
  border-radius: 47px;
  background: #2c2c2c;
}

.field input {
  flex: 1;
  min-width: 0;
  height: 60px;
  padding: 0 0 0 36px;
  border: 0;
  outline: 0;
  background: none;
  color: #fff;
  font: 43px Inter, sans-serif;
}

.tools {
  display: flex;
  align-items: center;
  gap: 60px;
}
</style>
